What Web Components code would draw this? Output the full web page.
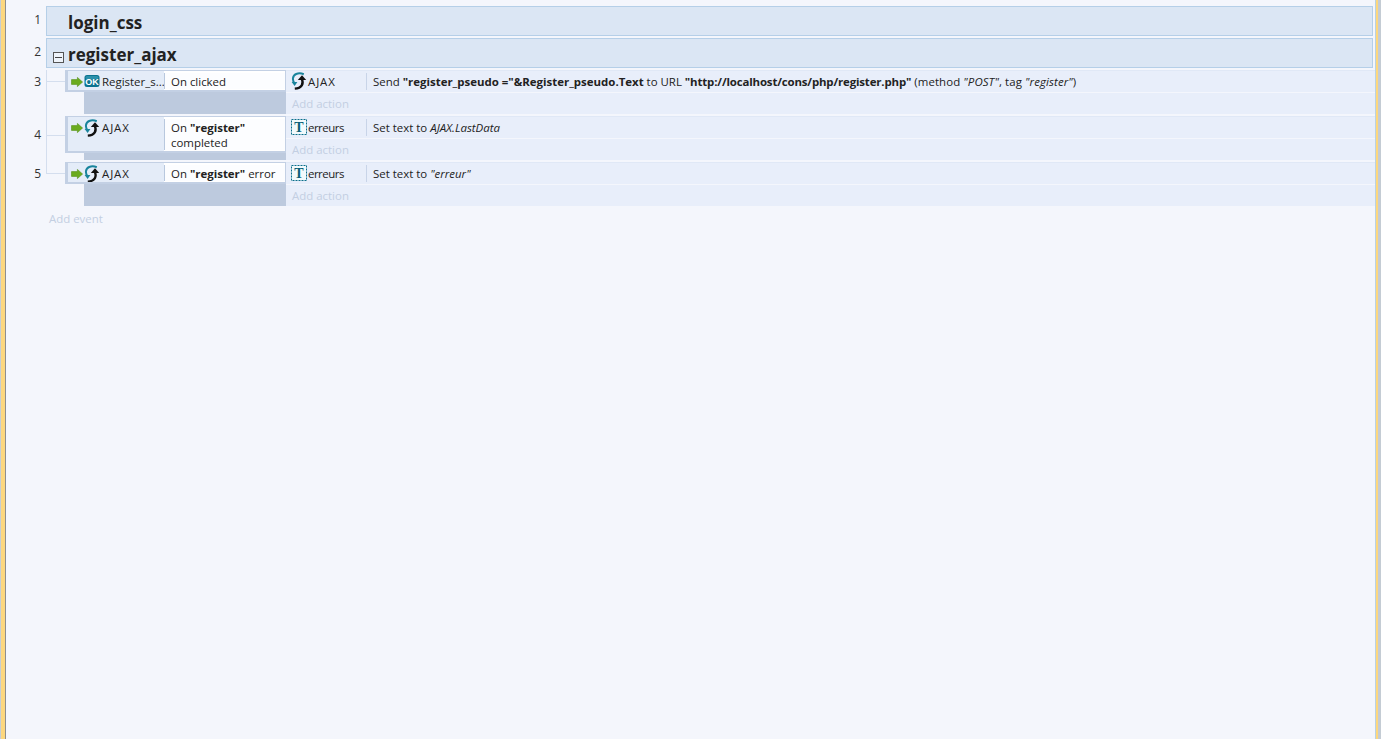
<!DOCTYPE html>
<html>
<head>
<meta charset="utf-8">
<title>Event sheet</title>
<style>
  html, body { margin: 0; height: 100%; }
  body { background: #f4f6fc; overflow: hidden; }
  .url { letter-spacing: -0.15px; }
  .wide { letter-spacing: 0.1px; }
</style>
</head>
<body>
<event-sheet>
  <event-group num="1" name="login_css"></event-group>
  <event-group num="2" name="register_ajax" collapsible></event-group>
  <event-row num="3" object="Register_s..." icon="ok">
    <span slot="cond">On clicked</span>
    <event-action icon="ajax" object="AJAX" style="--label-spacing: 0.9px">Send <b>"register_pseudo ="&amp;Register_pseudo.Text</b> to URL <b class="url">"http://localhost/cons/php/register.php"</b> <span class="wide">(method <i>"POST"</i>, tag <i>"register"</i>)</span></event-action>
  </event-row>
  <event-row num="4" object="AJAX" icon="ajax" tall style="--label-spacing: 0.9px">
    <span slot="cond">On <b>"register"</b><br>completed</span>
    <event-action icon="text" object="erreurs" style="--label-spacing: -0.5px">Set text to <i>AJAX.LastData</i></event-action>
  </event-row>
  <event-row num="5" object="AJAX" icon="ajax" last style="--label-spacing: 0.9px">
    <span slot="cond">On <b>"register"</b> error</span>
    <event-action icon="text" object="erreurs" style="--label-spacing: -0.5px">Set text to <i>"erreur"</i></event-action>
  </event-row>
</event-sheet>

<script>
const icons = {
  ok: `<svg width="16" height="14" viewBox="0 0 16 14"><rect x="0.5" y="1" width="15" height="12" rx="2.5" fill="#0b7390"/><rect x="1.5" y="2" width="13" height="3" rx="1.5" fill="#2a90ab"/><text x="8" y="10.9" text-anchor="middle" font-family="Liberation Sans, sans-serif" font-size="9" font-weight="700" fill="#fff">OK</text></svg>`,
  ajax: `<svg width="16" height="18" viewBox="0 0 16 18" fill="none"><path d="M3.6 11.4C1 8.2 1.4 3.6 5.2 2 7.8 1 10.2 1.2 12.8 2.2" stroke="#19849c" stroke-width="2"/><path d="M0.6 10H6.4L3.6 14z" fill="#19849c"/><path d="M11 7.4C12.6 11.4 11.2 16 3.8 16.6" stroke="#111" stroke-width="2.4"/><path d="M6.8 8H15.2L11 3.2z" fill="#111"/></svg>`,
  text: `<svg width="16" height="16" viewBox="0 0 16 16"><rect x="0.5" y="0.5" width="15" height="15" fill="#f2fafc" stroke="#0b6f8a" stroke-dasharray="2 1"/><text x="8" y="12.8" text-anchor="middle" font-family="Liberation Serif, serif" font-size="14" font-weight="700" fill="#0b5f78">T</text></svg>`,
  arrow: `<svg width="12" height="10" viewBox="0 0 12 10"><path d="M0.5 2.6H6.4V0.4L11.6 5 6.4 9.6V7.4H0.5z" fill="#6aab1e" stroke="#568f16" stroke-width="0.6"/></svg>`
};

const groupTemplate = document.createElement('template');
groupTemplate.innerHTML = `
  <style>
    :host { display: flex; height: 30px; margin: 0 2px 2px 0; }
    .num {
      width: 40px;
      box-sizing: border-box;
      padding: 5px 5px 0 0;
      text-align: right;
      font-size: 12px;
      line-height: 18px;
      color: #333;
    }
    .bar {
      flex: 1;
      display: flex;
      align-items: center;
      box-sizing: border-box;
      border: 1px solid #b5cfe8;
      background: #dbe6f4;
      padding: 3px 0 0 21px;
      position: relative;
      font-size: 17px;
      font-weight: 700;
      color: #222;
    }
    .box {
      display: none;
      position: absolute;
      left: 6px;
      top: 13px;
      width: 9px;
      height: 9px;
      border: 1px solid #555;
      background: #eef3fa;
    }
    .box::after {
      content: '';
      position: absolute;
      left: 1px;
      right: 1px;
      top: 4px;
      height: 1px;
      background: #444;
    }
    :host([collapsible]) .box { display: block; }
  </style>
  <div class="num"></div>
  <div class="bar"><span class="box"></span><span class="name"></span></div>
`;

class EventGroup extends HTMLElement {
  constructor() {
    super();
    const root = this.attachShadow({ mode: 'open' });
    root.appendChild(groupTemplate.content.cloneNode(true));
    root.querySelector('.num').textContent = this.getAttribute('num');
    root.querySelector('.name').textContent = this.getAttribute('name');
  }
}

const rowTemplate = document.createElement('template');
rowTemplate.innerHTML = `
  <style>
    :host { display: flex; margin-bottom: 2px; position: relative; }
    .num {
      width: 36px;
      box-sizing: border-box;
      padding-right: 1px;
      padding-top: 3px;
      text-align: right;
      font-size: 12px;
      line-height: 18px;
      color: #333;
    }
    :host([tall]) .num { padding-top: 10px; }
    .tree {
      width: 23px;
      position: relative;
      margin-left: 4px;
      margin-right: -4px;
      box-sizing: border-box;
      border-left: 1px solid #d4deee;
      margin-bottom: -2px;
    }
    .tree::after {
      content: '';
      position: absolute;
      left: 0;
      right: 4px;
      top: 11px;
      height: 1px;
      background: #d4deee;
    }
    :host([tall]) .tree::after { top: 19px; }
    :host([last]) .tree { border-left: 0; }
    :host([last]) .tree::before {
      content: '';
      position: absolute;
      left: 0;
      top: 0;
      width: 1px;
      height: 12px;
      background: #d4deee;
    }
    .left { width: 221px; display: flex; flex-direction: column; background: linear-gradient(#bdcade, #bdcade) 19px 0 / 202px 100% no-repeat; }
    .head {
      display: flex;
      box-sizing: border-box;
      height: 22px;
      background: #fff;
      border: 1px solid #c3d0e4;
      border-left-width: 3px;
      border-bottom-width: 2px;
    }
    :host([tall]) .head { height: 37px; }
    .obj {
      width: 96px;
      box-sizing: border-box;
      display: flex;
      align-items: flex-start;
      background: #e4ecf8;
      padding: 3px 0 0 3px;
      white-space: nowrap;
      overflow: hidden;
    }
    .obj .arrow { margin: 1px 1px 0 0; width: 12px; height: 10px; flex: none; }
    .obj .ic { flex: none; width: 16px; height: 14px; margin-right: 2px; }
    .obj .ic.ajax { margin-top: -1px; height: 18px; }
    .label { line-height: 15px; letter-spacing: var(--label-spacing, 0); }
    .cond {
      flex: 1;
      margin-top: 2px;
      margin-bottom: 1px;
      border-left: 1px solid #b8c8de;
      padding: 1px 0 0 6px;
      line-height: 15px;
      background: #fcfdff;
    }
    .fill { flex: 1; }
    .right { flex: 1; display: flex; flex-direction: column; }
    .actions { background: #e8eefa; border-top: 1px solid #e0e8f6; height: 22px; box-sizing: border-box; margin-bottom: 1px; }
    .add {
      height: 21px;
      background: #e8eefa;
      color: #c3cfe2;
      padding-left: 6px;
      line-height: 21px;
    }
  </style>
  <div class="num"></div>
  <div class="tree"></div>
  <div class="left">
    <div class="head">
      <div class="obj"><span class="arrow"></span><span class="ic"></span><span class="label"></span></div>
      <div class="cond"><slot name="cond"></slot></div>
    </div>
    <div class="fill"></div>
  </div>
  <div class="right">
    <div class="actions"><slot></slot></div>
    <div class="add">Add action</div>
  </div>
`;

class EventRow extends HTMLElement {
  constructor() {
    super();
    const root = this.attachShadow({ mode: 'open' });
    root.appendChild(rowTemplate.content.cloneNode(true));
    const icon = this.getAttribute('icon');
    root.querySelector('.num').textContent = this.getAttribute('num');
    root.querySelector('.arrow').innerHTML = icons.arrow;
    root.querySelector('.ic').innerHTML = icons[icon];
    root.querySelector('.ic').classList.add(icon);
    root.querySelector('.label').textContent = this.getAttribute('object');
  }
}

const actionTemplate = document.createElement('template');
actionTemplate.innerHTML = `
  <style>
    :host { display: flex; height: 21px; align-items: center; white-space: nowrap; }
    .ic { width: 22px; flex: none; padding-left: 5px; display: flex; box-sizing: border-box; margin-top: -1px; }
    .obj { width: 58px; flex: none; letter-spacing: var(--label-spacing, 0); }
    .text { border-left: 1px solid #c8d4e8; padding: 1px 0 0 6px; height: 17px; box-sizing: border-box; line-height: 15px; }
    b { font-weight: 700; }
  </style>
  <span class="ic"></span>
  <span class="obj"></span>
  <span class="text"><slot></slot></span>
`;

class EventAction extends HTMLElement {
  constructor() {
    super();
    const root = this.attachShadow({ mode: 'open' });
    root.appendChild(actionTemplate.content.cloneNode(true));
    root.querySelector('.ic').innerHTML = icons[this.getAttribute('icon')];
    root.querySelector('.obj').textContent = this.getAttribute('object');
  }
}

const sheetTemplate = document.createElement('template');
sheetTemplate.innerHTML = `
  <style>
    :host {
      display: block;
      height: 739px;
      box-sizing: border-box;
      border-left: 1px solid #c4ccd4;
      border-right: 3px solid #c4ccd4;
      font-family: "Open Sans", "Noto Sans", sans-serif;
      font-size: 11.45px;
      color: #222;
      background: #f4f6fc;
    }
    .frame {
      height: 100%;
      box-sizing: border-box;
      border-left: 4px solid #fdd77e;
      border-right: 2px solid #fdd77e;
    }
    .inner {
      height: 100%;
      box-sizing: border-box;
      border-left: 1px solid #8e8e8e;
      border-right: 1px solid #b9d2e2;
      padding-top: 6px;
    }
    .add-event { padding: 3px 0 0 43px; color: #c3cfe2; line-height: 15px; }
  </style>
  <div class="frame">
    <div class="inner">
      <slot></slot>
      <div class="add-event">Add event</div>
    </div>
  </div>
`;

class EventSheet extends HTMLElement {
  constructor() {
    super();
    this.attachShadow({ mode: 'open' }).appendChild(sheetTemplate.content.cloneNode(true));
  }
}

customElements.define('event-group', EventGroup);
customElements.define('event-row', EventRow);
customElements.define('event-action', EventAction);
customElements.define('event-sheet', EventSheet);
</script>
</body>
</html>
